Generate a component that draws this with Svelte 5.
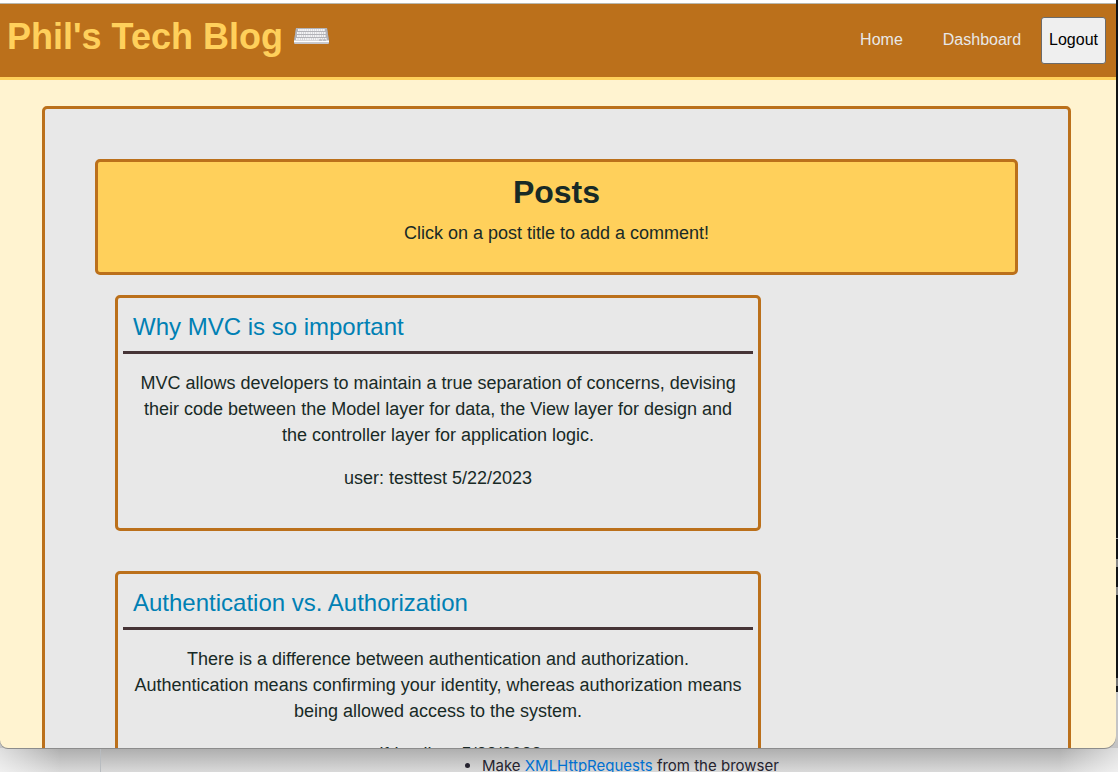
<script>
  const keyRows = [
    { y: 2, x: 5, n: 13 },
    { y: 5, x: 4, n: 13 },
    { y: 8, x: 4, n: 13 },
    { y: 11, x: 3, n: 14 }
  ];
  const posts = [
    {
      title: 'Why MVC is so important',
      text: 'MVC allows developers to maintain a true separation of concerns, devising their code between the Model layer for data, the View layer for design and the controller layer for application logic.',
      meta: 'user: testtest 5/22/2023'
    },
    {
      title: 'Authentication vs. Authorization',
      text: 'There is a difference between authentication and authorization. Authentication means confirming your identity, whereas authorization means being allowed access to the system.',
      meta: 'user: ifdsurllers 5/22/2023'
    }
  ];
</script>

<div class="desktop">
  <div class="window">
    <header>
      <h1>
        Phil's Tech Blog
        <svg class="keyboard" viewBox="0 0 37 18" aria-hidden="true">
          <path d="M3 1H34L36 14V16Q36 17 35 17H2Q1 17 1 16V14Z" fill="#96969c" />
          <path d="M3 1H34L36 14.5H1Z" fill="#b3b3b8" />
          {#each keyRows as row}
            {#each Array(row.n) as _, i}
              <rect x={row.x + i * (37 - row.x * 2) / row.n} y={row.y} width="1.8" height="2" fill="#f4f4f6" />
            {/each}
          {/each}
          <path d="M1 14.5H36" stroke="#fff" stroke-width="2" />
          <path d="M26 13H34" stroke="#a3a3a8" stroke-dasharray="3 1" />
          <path d="M1.5 16.5H35.5" stroke="#c6c6cb" />
        </svg>
      </h1>
      <nav>
        <a href="#home">Home</a>
        <a href="#dashboard">Dashboard</a>
        <button type="button">Logout</button>
      </nav>
    </header>
    <main>
      <section class="intro">
        <h2>Posts</h2>
        <p>Click on a post title to add a comment!</p>
      </section>
      {#each posts as post}
        <article>
          <h3><a href="#post">{post.title}</a></h3>
          <p>{post.text}</p>
          <p>{post.meta}</p>
        </article>
      {/each}
    </main>
  </div>
  <div class="behind">
    <ul>
      <li>Make <a href="#xhr">XMLHttpRequests</a> from the browser</li>
    </ul>
  </div>
</div>

<style>
  :global(body) { margin: 0; }
  .desktop {
    box-sizing: border-box;
    height: 100vh;
    overflow: hidden;
    display: flex;
    flex-direction: column;
    padding-right: 2px;
    font-family: "Liberation Sans", Arial, sans-serif;
    color: #182a26;
    background: linear-gradient(to bottom, #111316 538px, #999 538px 539px, #111316 539px 559px, #888 559px 567px, #111316 567px 587px, #888 587px 595px, #111316 595px 678px, #777 678px 686px, #111316 686px 692px, #c4c4c4 692px);
  }
  .window {
    flex: 1;
    min-height: 0;
    overflow: hidden;
    border-top: 1px solid #b8b8b0;
    margin-top: 3px;
    border-radius: 0 0 12px 8px;
    background: #fff3d0;
    box-shadow: 0 -4px #fff, 0 1px #8c8c8c;
    position: relative;
    z-index: 1;
  }
  header {
    display: flex;
    justify-content: space-between;
    align-items: center;
    height: 73px;
    padding: 0 10px 0 7px;
    background: #bb701b;
    border-bottom: 3px solid #ffd05b;
  }
  h1 {
    display: flex;
    align-items: center;
    gap: 10px;
    margin: 0;
    padding-bottom: 8px;
    font-size: 36px;
    line-height: 44px;
    color: #ffd05b;
  }
  .keyboard { width: 37px; height: 18px; margin-bottom: 2px; }
  nav { display: flex; align-items: center; font-size: 16px; }
  nav a { padding: 0 20px 2px; color: #e8e8e8; text-decoration: none; }
  button {
    height: 47px;
    padding: 0 7px 2px;
    border: 1px solid #6b6b6b;
    border-radius: 3px;
    background: #efefef;
    color: #000;
    font: inherit;
  }
  main {
    margin: 26px 45px 0 42px;
    padding: 50px;
    border: 3px solid #bb701b;
    border-radius: 5px;
    background: #e8e8e8;
    font-size: 18px;
    line-height: 26px;
    text-align: center;
  }
  .intro {
    padding: 10px 10px 26px;
    border: 3px solid #bb701b;
    border-radius: 5px;
    background: #ffd05b;
  }
  h2 { margin: 0 0 8px; font-size: 32px; line-height: 40px; }
  p { margin: 0; }
  article {
    width: 70%;
    box-sizing: border-box;
    margin: 20px 20px 40px;
    padding: 5px 5px 20px;
    border: 3px solid #bb701b;
    border-radius: 5px;
  }
  h3 {
    margin: 0 0 16px;
    padding: 7px 10px;
    border-bottom: 3px solid #463436;
    font-size: 24px;
    font-weight: 400;
    line-height: 34px;
    text-align: left;
  }
  h3 a { color: #0080b4; text-decoration: none; }
  article p { padding: 0 10px; margin-bottom: 17px; }
  .behind {
    height: 24px;
    margin-right: -2px;
    overflow: hidden;
    background: linear-gradient(to right, #fff9, #fff0 60px, #fff0 1060px, #fff9), linear-gradient(to bottom, #adadad, #d9d9d9);
    font-family: Inter, sans-serif;
    font-size: 15px;
    line-height: 24px;
    color: #25232f;
  }
  ul {
    margin: 0 0 0 100px;
    padding: 6px 0 0 381px;
    border-left: 1px solid #b8bcc0;
  }
  .behind a { color: #0070d0; text-decoration: none; }
</style>
